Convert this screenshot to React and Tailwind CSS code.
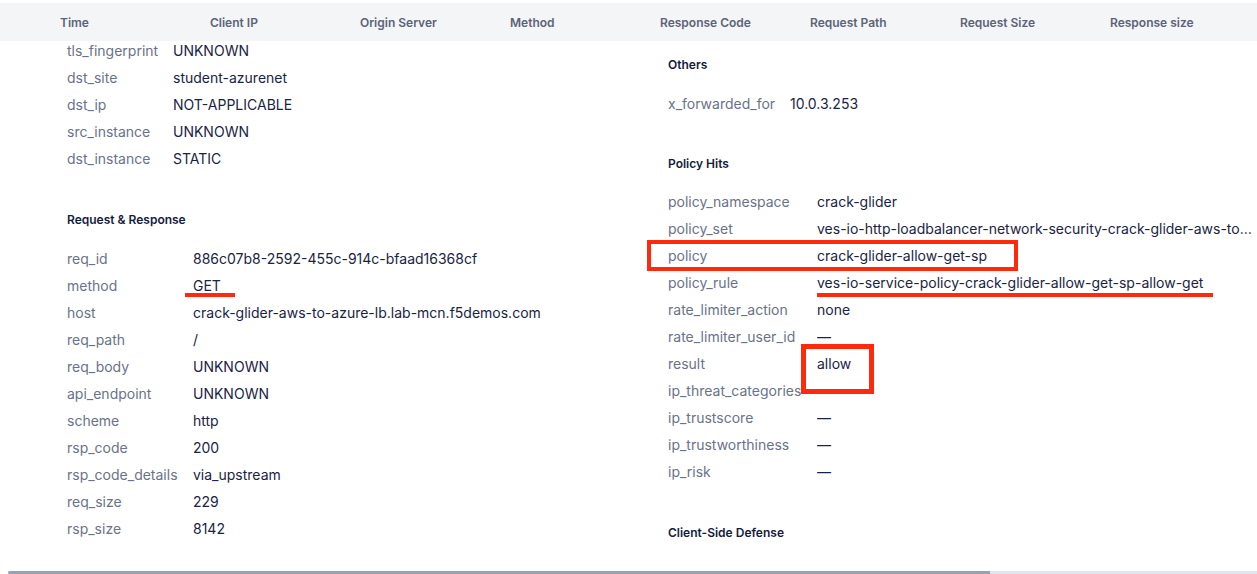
import React from "react";

const headers = [
  "Time",
  "Client IP",
  "Origin Server",
  "Method",
  "Response Code",
  "Request Path",
  "Request Size",
  "Response size",
];

function Rows({ rows, keyW }) {
  return (
    <div className="flex flex-col">
      {rows.map(([k, v]) => (
        <div key={k} className="flex h-[27px] items-center text-[14px] leading-[17px]">
          <div
            className="shrink-0 whitespace-nowrap text-[#6b7287]"
            style={{ width: keyW }}
          >
            {k}
          </div>
          <div className="min-w-0 flex-1 truncate text-[#1b2343]">{v}</div>
        </div>
      ))}
    </div>
  );
}

function Heading({ children }) {
  return (
    <div className="h-4 text-[12px] font-semibold leading-4 text-[#141b3c]">
      {children}
    </div>
  );
}

export default function App() {
  return (
    <div
      className="relative flex h-[574px] w-[1257px] flex-col overflow-hidden bg-white"
      style={{ fontFamily: "Inter, 'Noto Sans', sans-serif" }}
    >
      {/* table header */}
      <div className="mt-[3px] flex h-[38px] shrink-0 items-center bg-[#f4f5f7] pl-[60px] pt-[1px]">
        <div className="grid grid-cols-[repeat(8,150px)]">
          {headers.map((h) => (
            <div
              key={h}
              className="whitespace-nowrap text-[12px] font-semibold text-[#5c6378]"
            >
              {h}
            </div>
          ))}
        </div>
      </div>

      {/* body */}
      <div className="min-h-0 flex-1 overflow-hidden">
        <div className="mt-[-4.5px] grid grid-cols-[601px_minmax(0,1fr)] pl-[67px] pr-[5px]">
          {/* left column */}
          <div className="flex flex-col">
            <Rows
              keyW={106}
              rows={[
                ["tls_fingerprint", "UNKNOWN"],
                ["dst_site", "student-azurenet"],
                ["dst_ip", "NOT-APPLICABLE"],
                ["src_instance", "UNKNOWN"],
                ["dst_instance", "STATIC"],
              ]}
            />
            <div className="mt-[40px]">
              <Heading>Request &amp; Response</Heading>
            </div>
            <div className="mt-[17px]">
              <Rows
                keyW={126}
                rows={[
                  ["req_id", "886c07b8-2592-455c-914c-bfaad16368cf"],
                  ["method", "GET"],
                  ["host", "crack-glider-aws-to-azure-lb.lab-mcn.f5demos.com"],
                  ["req_path", "/"],
                  ["req_body", "UNKNOWN"],
                  ["api_endpoint", "UNKNOWN"],
                  ["scheme", "http"],
                  ["rsp_code", "200"],
                  ["rsp_code_details", "via_upstream"],
                  ["req_size", "229"],
                  ["rsp_size", "8142"],
                ]}
              />
            </div>
          </div>

          {/* right column */}
          <div className="flex min-w-0 flex-col pt-[20.5px]">
            <Heading>Others</Heading>
            <div className="mt-[17px]">
              <Rows keyW={122} rows={[["x_forwarded_for", "10.0.3.253"]]} />
            </div>
            <div className="mt-[39px]">
              <Heading>Policy Hits</Heading>
            </div>
            <div className="mt-[16px]">
              <Rows
                keyW={149}
                rows={[
                  ["policy_namespace", "crack-glider"],
                  [
                    "policy_set",
                    "ves-io-http-loadbalancer-network-security-crack-glider-aws-to-azure-lb",
                  ],
                  ["policy", "crack-glider-allow-get-sp"],
                  ["policy_rule", "ves-io-service-policy-crack-glider-allow-get-sp-allow-get"],
                  ["rate_limiter_action", "none"],
                  ["rate_limiter_user_id", "—"],
                  ["result", "allow"],
                  ["ip_threat_categories", ""],
                  ["ip_trustscore", "—"],
                  ["ip_trustworthiness", "—"],
                  ["ip_risk", "—"],
                ]}
              />
            </div>
            <div className="mt-[40px]">
              <Heading>Client-Side Defense</Heading>
            </div>
          </div>
        </div>
      </div>

      {/* horizontal scrollbar */}
      <div className="flex h-[3px] shrink-0 pl-[8px]">
        <div className="w-[982px] rounded-l-sm bg-[#9aa1b0]" />
        <div className="flex-1 bg-[#e2e5ee]" />
      </div>

      {/* red annotations */}
      <div className="absolute left-[185px] top-[293px] h-[4px] w-[50px] bg-[#ff2a0c]" />
      <div className="absolute left-[817px] top-[293px] h-[4px] w-[396px] bg-[#ff2a0c]" />
      <div className="absolute left-[647px] top-[240px] h-[31px] w-[371px] border-4 border-[#ff2a0c]" />
      <div className="absolute left-[801px] top-[344px] h-[50px] w-[73px] border-[5px] border-[#ff2a0c]" />
    </div>
  );
}
